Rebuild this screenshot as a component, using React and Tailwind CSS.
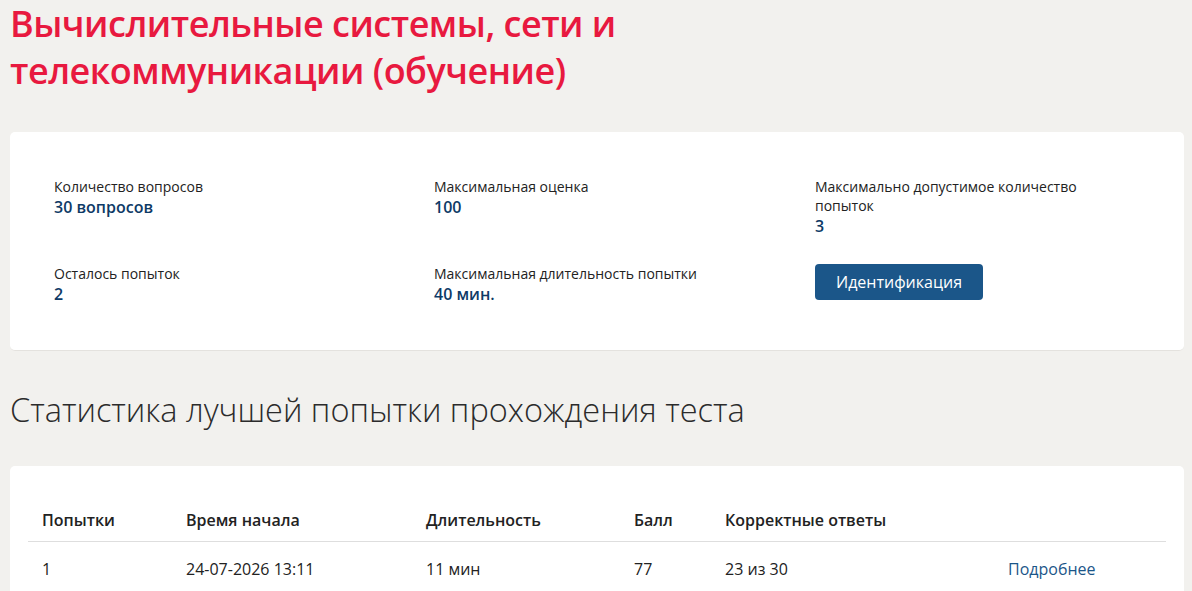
import React from 'react';

const info = [
    { label: 'Количество вопросов', value: '30 вопросов' },
    { label: 'Максимальная оценка', value: '100' },
    { label: 'Максимально допустимое количество попыток', value: '3' },
    { label: 'Осталось попыток', value: '2' },
    { label: 'Максимальная длительность попытки', value: '40 мин.' },
];

const InfoItem = ({ label, value }) => (
    <div className="flex flex-col">
        <span className="text-[14px] leading-[19px] text-[#222] pr-[90px]">{label}</span>
        <span className="text-[16px] leading-[22px] font-semibold text-[#0e3a66]">{value}</span>
    </div>
);

export default function App() {
    return (
        <div
            className="min-h-screen bg-[#f2f1ee] pl-[10px] pr-[8px] pb-[40px]"
            style={{ fontFamily: '"Open Sans", "Noto Sans", sans-serif' }}
        >
            {/* Title */}
            <h1 className="text-[36px] leading-[47px] font-semibold text-[#e8193f] tracking-[-0.5px] max-w-[640px]">
                Вычислительные системы, сети и телекоммуникации (обучение)
            </h1>

            {/* Test info */}
            <div className="mt-[38px] bg-white rounded-[5px] border-b border-[#e4e2de] pl-[44px] pt-[45px] pb-[45px]">
                <div className="grid grid-cols-[380px_381px_1fr] gap-y-[27px]">
                    <InfoItem {...info[0]} />
                    <InfoItem {...info[1]} />
                    <InfoItem {...info[2]} />
                    <InfoItem {...info[3]} />
                    <InfoItem {...info[4]} />
                    <div className="flex items-start">
                        <button className="h-[36px] px-[21px] bg-[#1b5689] text-white text-[16px] rounded-[4px]">
                            Идентификация
                        </button>
                    </div>
                </div>
            </div>

            {/* Stats */}
            <h2 className="mt-[38px] text-[32.5px] leading-[42px] font-light text-[#2b2b2b]">
                Статистика лучшей попытки прохождения теста
            </h2>

            <div className="mt-[35px] bg-white rounded-[5px] px-[18px] pt-[34px] pb-[20px]">
                <table className="w-full text-left text-[16px] text-[#222]">
                    <thead>
                        <tr className="border-b border-[#dedede]">
                            <th className="font-semibold pl-[14px] h-[41px] w-[158px]">Попытки</th>
                            <th className="font-semibold w-[240px]">Время начала</th>
                            <th className="font-semibold w-[208px]">Длительность</th>
                            <th className="font-semibold w-[91px]">Балл</th>
                            <th className="font-semibold w-[283px]">Корректные ответы</th>
                            <th></th>
                        </tr>
                    </thead>
                    <tbody>
                        <tr>
                            <td className="pl-[14px] h-[56px]">1</td>
                            <td>24-07-2026 13:11</td>
                            <td>11 мин</td>
                            <td>77</td>
                            <td>23 из 30</td>
                            <td className="text-[#1b5689]">Подробнее</td>
                        </tr>
                    </tbody>
                </table>
            </div>
        </div>
    );
}
